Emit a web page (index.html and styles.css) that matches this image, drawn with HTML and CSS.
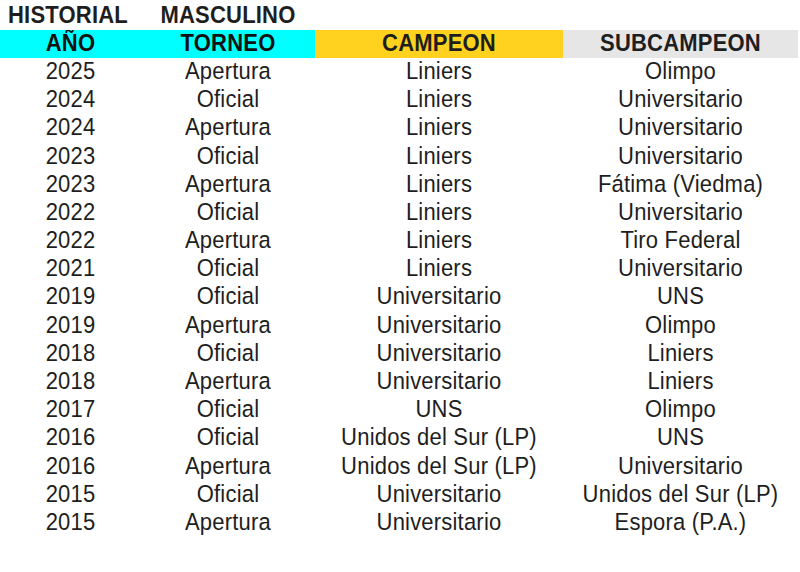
FILE: index.html
```html
<!DOCTYPE html>
<html lang="es">
<head>
<meta charset="utf-8">
<title>Historial Masculino</title>
<link rel="stylesheet" href="styles.css">
</head>
<body>
<div class="sheet">
  <div class="row title"><div><span>HISTORIAL</span></div><div><span>MASCULINO</span></div><div></div><div></div></div>
  <div class="row head"><div class="cy"><span>AÑO</span></div><div class="cy"><span>TORNEO</span></div><div class="gold"><span>CAMPEON</span></div><div class="grey"><span>SUBCAMPEON</span></div></div>
  <div class="row"><div><span>2025</span></div><div><span>Apertura</span></div><div><span>Liniers</span></div><div><span>Olimpo</span></div></div>
  <div class="row"><div><span>2024</span></div><div><span>Oficial</span></div><div><span>Liniers</span></div><div><span>Universitario</span></div></div>
  <div class="row"><div><span>2024</span></div><div><span>Apertura</span></div><div><span>Liniers</span></div><div><span>Universitario</span></div></div>
  <div class="row"><div><span>2023</span></div><div><span>Oficial</span></div><div><span>Liniers</span></div><div><span>Universitario</span></div></div>
  <div class="row"><div><span>2023</span></div><div><span>Apertura</span></div><div><span>Liniers</span></div><div><span>Fátima (Viedma)</span></div></div>
  <div class="row"><div><span>2022</span></div><div><span>Oficial</span></div><div><span>Liniers</span></div><div><span>Universitario</span></div></div>
  <div class="row"><div><span>2022</span></div><div><span>Apertura</span></div><div><span>Liniers</span></div><div><span>Tiro Federal</span></div></div>
  <div class="row"><div><span>2021</span></div><div><span>Oficial</span></div><div><span>Liniers</span></div><div><span>Universitario</span></div></div>
  <div class="row"><div><span>2019</span></div><div><span>Oficial</span></div><div><span>Universitario</span></div><div><span>UNS</span></div></div>
  <div class="row"><div><span>2019</span></div><div><span>Apertura</span></div><div><span>Universitario</span></div><div><span>Olimpo</span></div></div>
  <div class="row"><div><span>2018</span></div><div><span>Oficial</span></div><div><span>Universitario</span></div><div><span>Liniers</span></div></div>
  <div class="row"><div><span>2018</span></div><div><span>Apertura</span></div><div><span>Universitario</span></div><div><span>Liniers</span></div></div>
  <div class="row"><div><span>2017</span></div><div><span>Oficial</span></div><div><span>UNS</span></div><div><span>Olimpo</span></div></div>
  <div class="row"><div><span>2016</span></div><div><span>Oficial</span></div><div><span>Unidos del Sur (LP)</span></div><div><span>UNS</span></div></div>
  <div class="row"><div><span>2016</span></div><div><span>Apertura</span></div><div><span>Unidos del Sur (LP)</span></div><div><span>Universitario</span></div></div>
  <div class="row"><div><span>2015</span></div><div><span>Oficial</span></div><div><span>Universitario</span></div><div><span>Unidos del Sur (LP)</span></div></div>
  <div class="row"><div><span>2015</span></div><div><span>Apertura</span></div><div><span>Universitario</span></div><div><span>Espora (P.A.)</span></div></div>
</div>
</body>
</html>
```
FILE: styles.css
```css
html, body {
  margin: 0;
  padding: 0;
  background: #ffffff;
}
.sheet {
  padding-top: 1.5px;
  width: 798px;
  font-family: "Liberation Sans", Arial, sans-serif;
  font-size: 22px;
  letter-spacing: 0.2px;
  color: #1e1e1e;
}
.row {
  display: grid;
  grid-template-columns: 141px 174px 248px 235px;
  height: 28.2px;
}
.row > div {
  display: flex;
  align-items: center;
  justify-content: center;
  white-space: nowrap;
  line-height: 1;
}
.row span {
  display: inline-block;
  transform: scaleY(1.07);
}
.title > div,
.head > div {
  font-weight: bold;
}
.title > div:first-child {
  justify-content: flex-start;
  padding-left: 8px;
}
.cy { background: #00ffff; color: #111; }
.gold { background: #fed21f; }
.grey { background: #e6e6e6; }
```
